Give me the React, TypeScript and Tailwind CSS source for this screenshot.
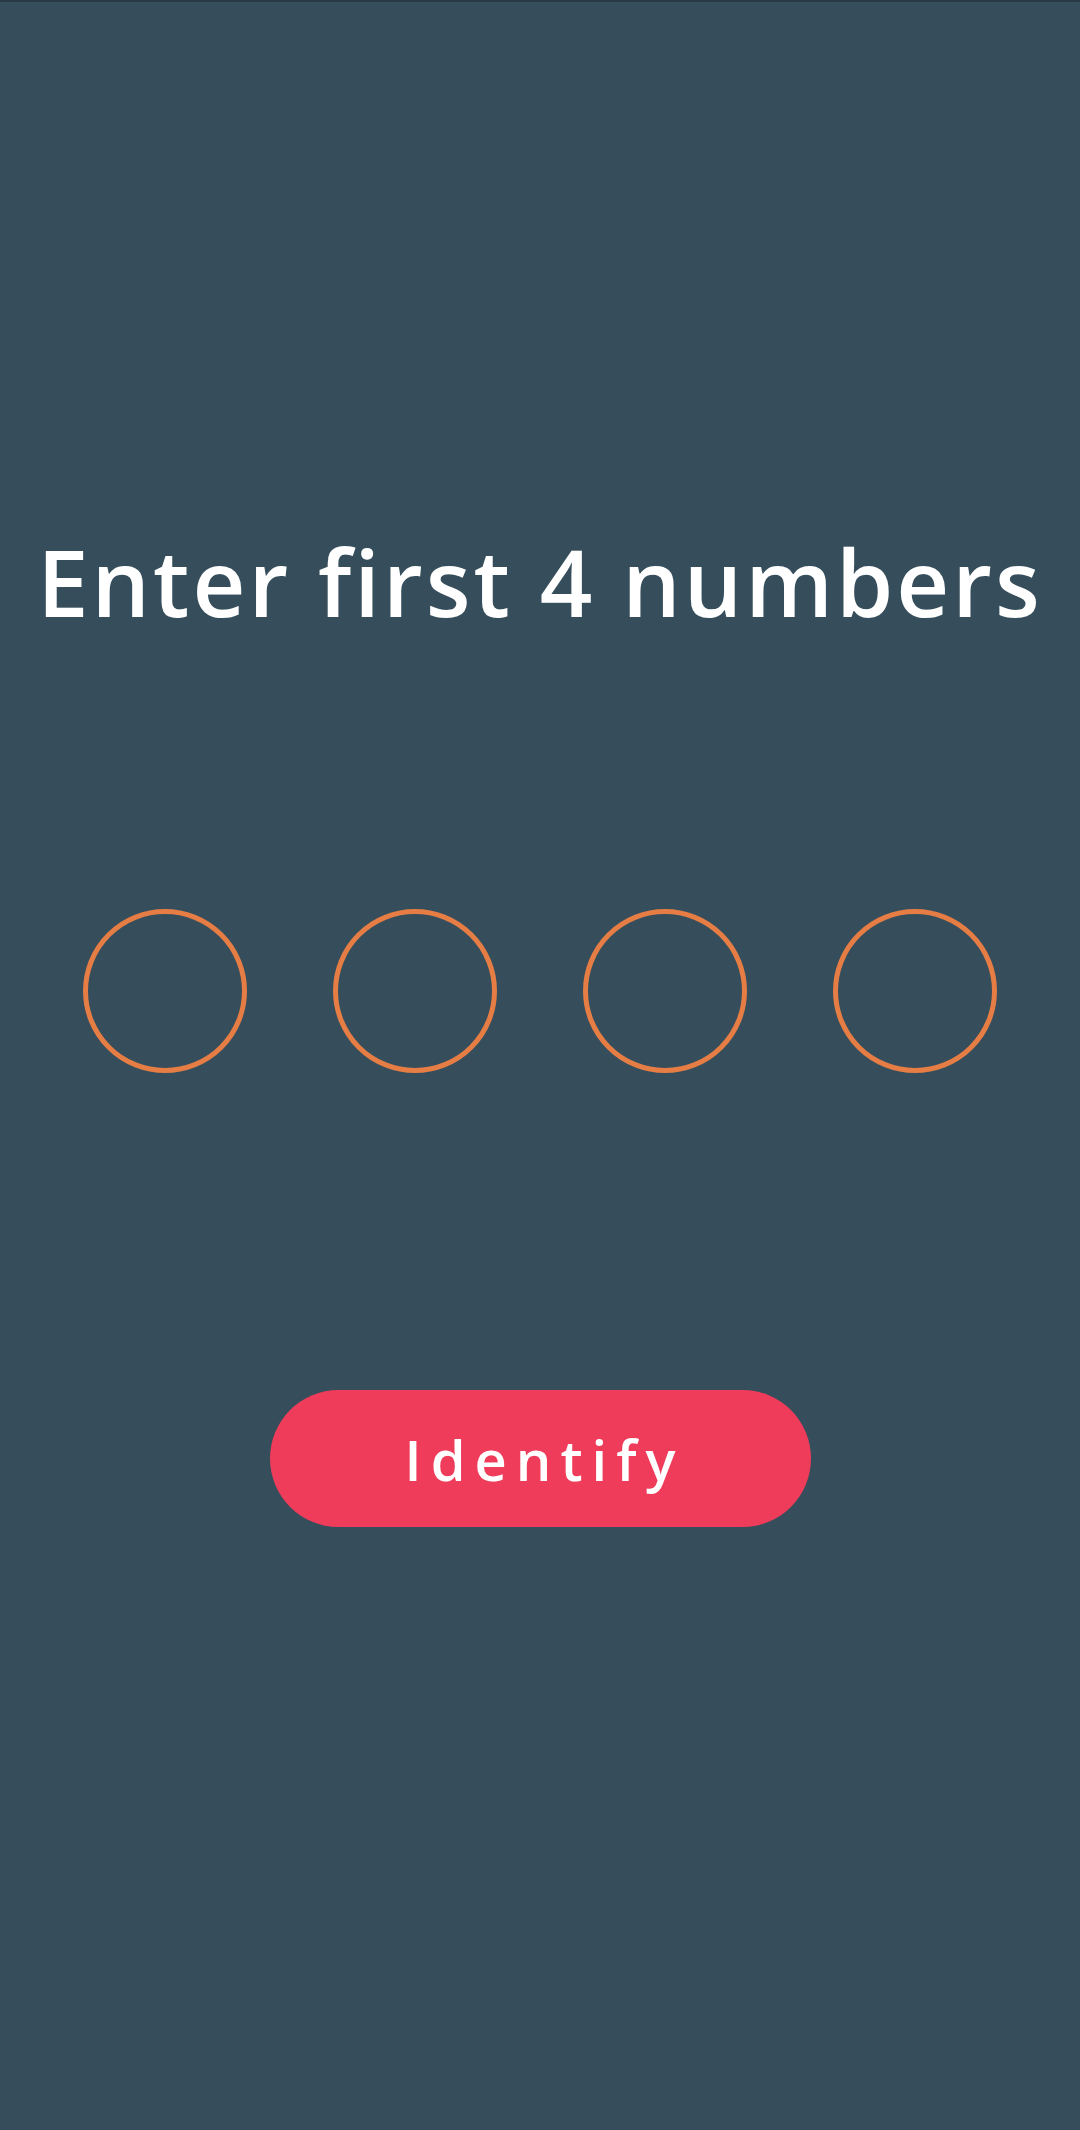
export default function App() {
  return (
    <div className="w-[1080px] h-[2130px] bg-[#364e5b] flex flex-col items-center border-t-2 border-[#283a45]" style={{ fontFamily: '"Open Sans", "Liberation Sans", sans-serif' }}>
      <h1 className="mt-[520px] h-[120px] flex items-center text-white text-[92px] font-semibold leading-none tracking-[3px] whitespace-nowrap">
        Enter first 4 numbers
      </h1>
      <div className="mt-[267px] flex gap-[86px]">
        {[0, 1, 2, 3].map((i) => (
          <div key={i} className="w-[164px] h-[164px] rounded-full border-[5px] border-[#e57d45]" />
        ))}
      </div>
      <button className="mt-[317px] w-[541px] h-[137px] rounded-full bg-[#ef3c5a] text-white text-[56px] font-semibold tracking-[9px] flex items-center justify-center pl-[9px]">
        Identify
      </button>
    </div>
  );
}
